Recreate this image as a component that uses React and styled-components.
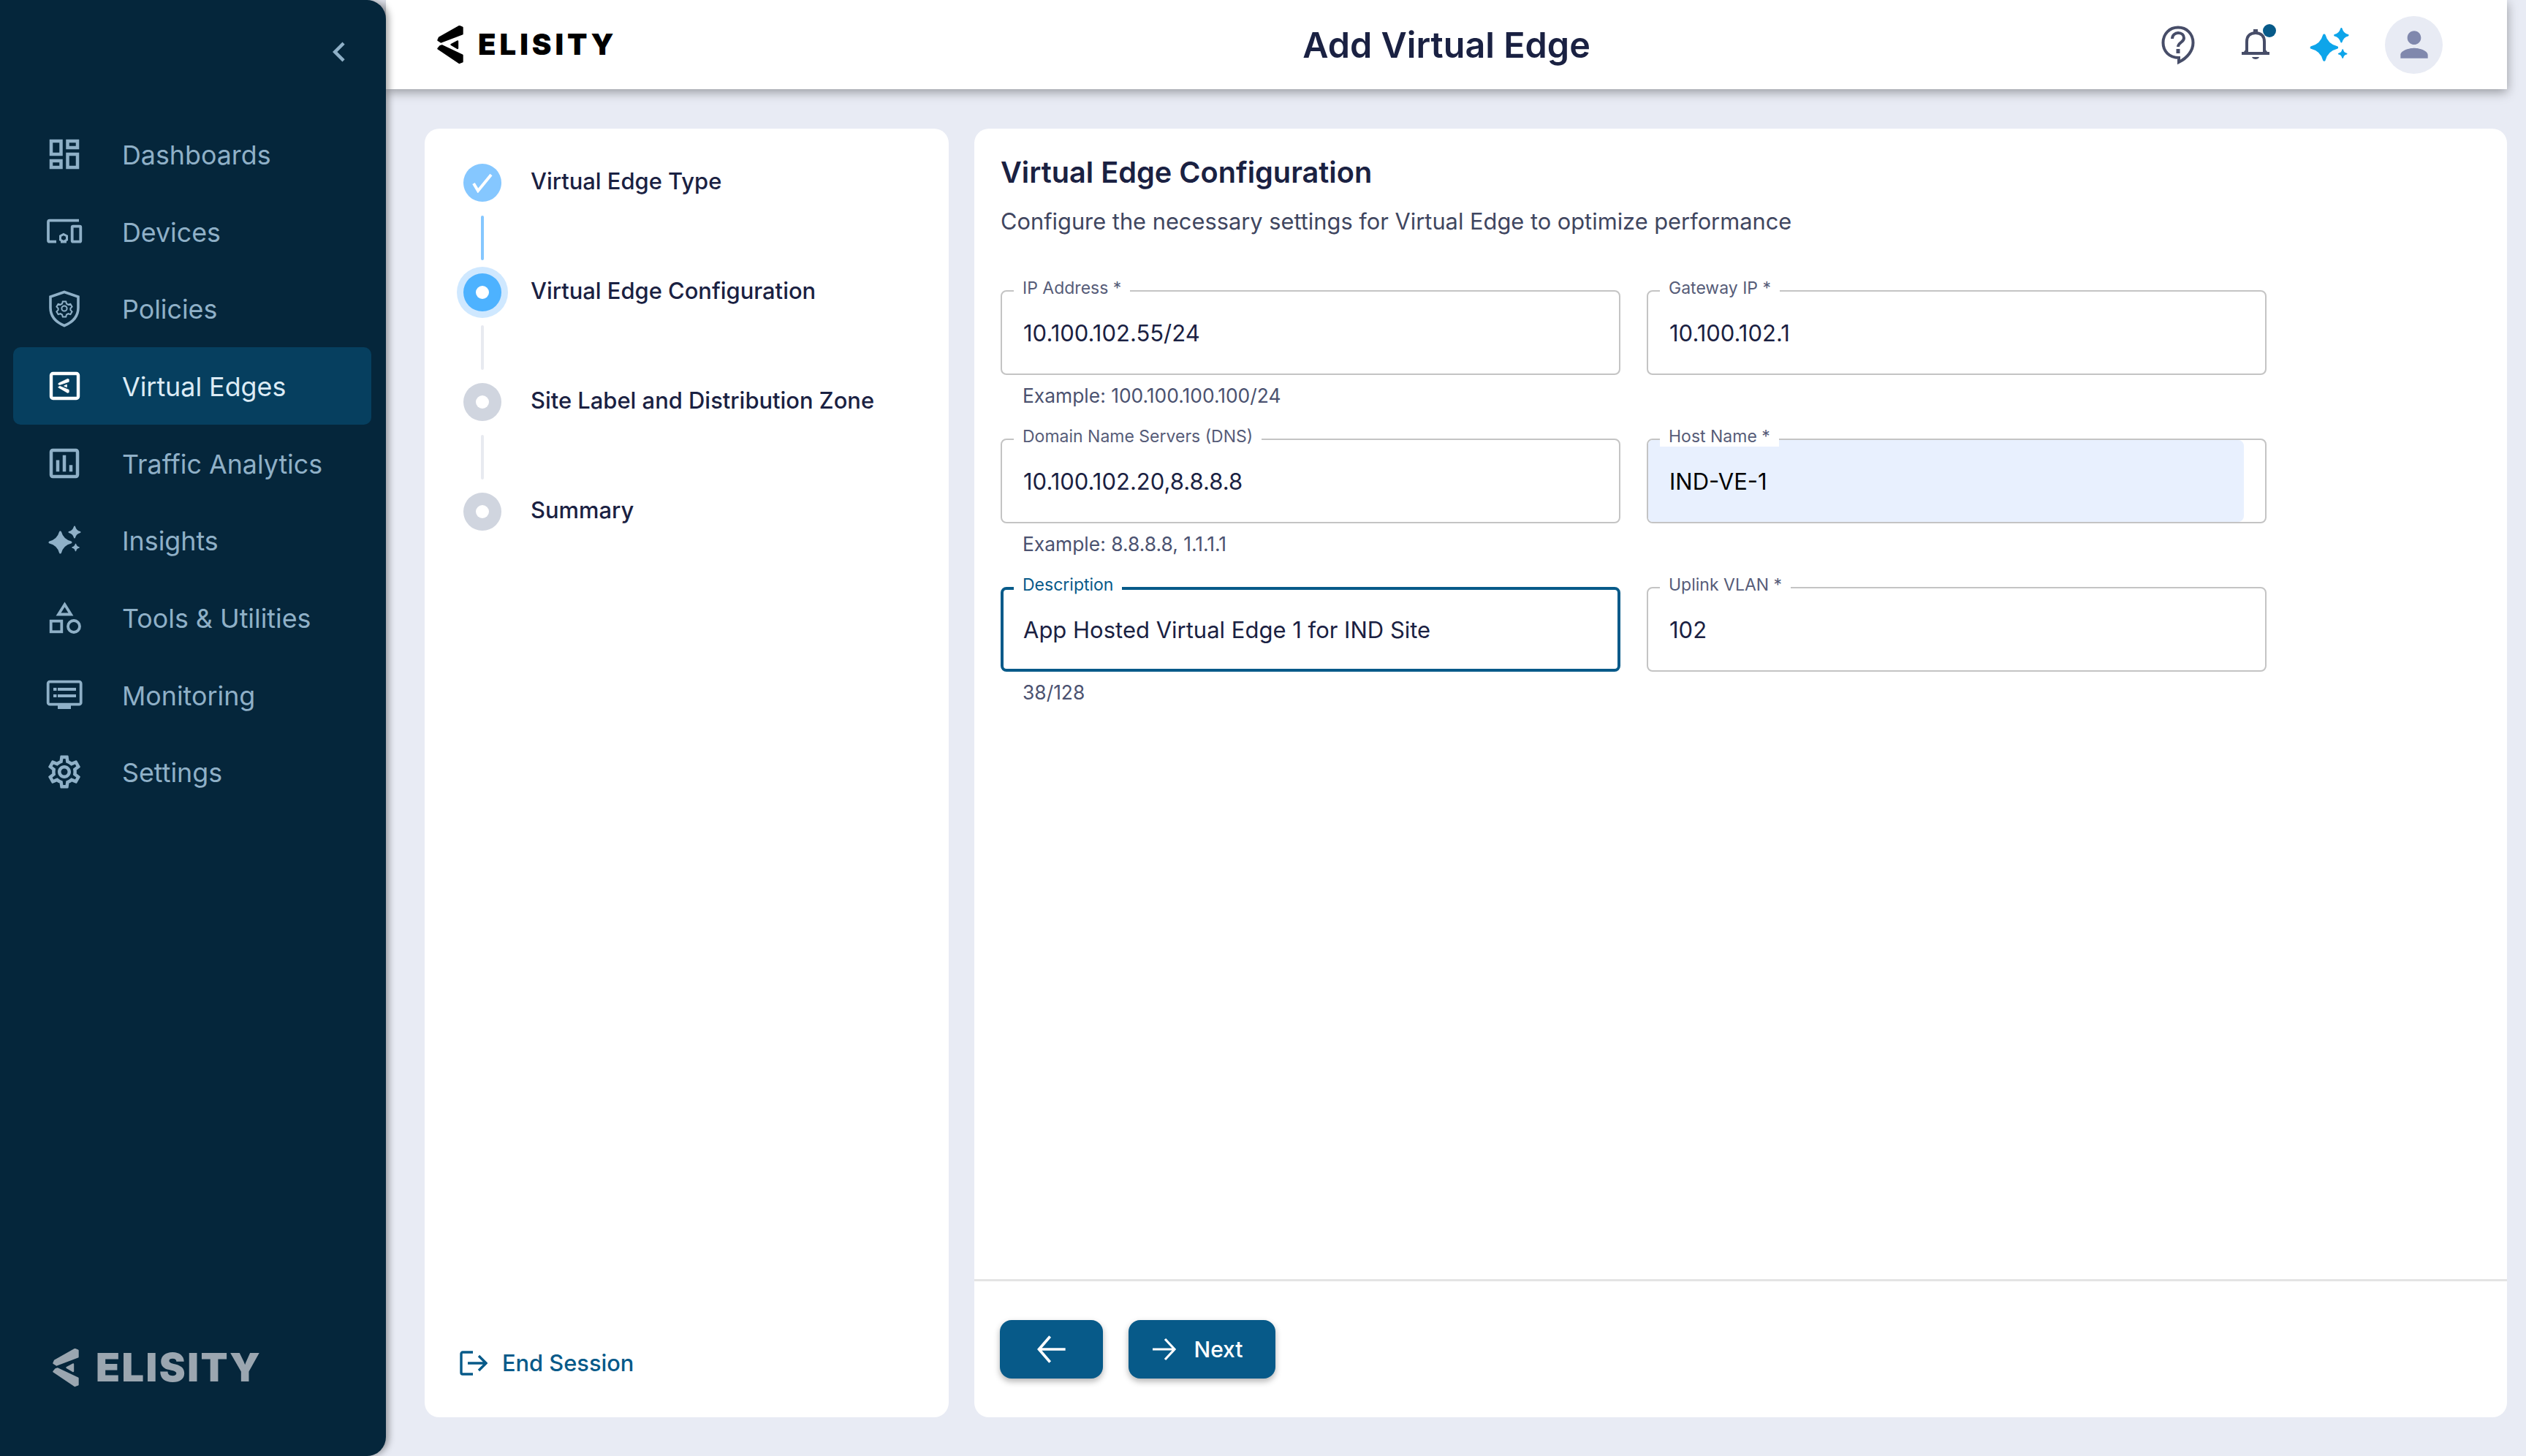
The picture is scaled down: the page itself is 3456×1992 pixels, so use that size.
import React from 'react';
import styled, {createGlobalStyle} from 'styled-components';
import {MdChevronLeft, MdOutlineDashboard, MdOutlineAssessment, MdOutlineSettings, MdPerson} from 'react-icons/md';

const GlobalStyle = createGlobalStyle`
    html, body {
        margin: 0;
        padding: 0;
    }
    body {
        background: #e8ebf4;
        font-family: Inter, "Noto Sans", sans-serif;
    }
    * {
        box-sizing: border-box;
    }
`;

const Page = styled.div`
    display: flex;
    width: 3456px;
    height: 1992px;
    background: #e8ebf4;
    overflow: hidden;
`;

const Sidebar = styled.aside`
    width: 528px;
    flex-shrink: 0;
    height: 100%;
    display: flex;
    flex-direction: column;
    background: #05263b;
    border-radius: 0 26px 26px 0;
    box-shadow: 4px 0 10px rgba(0,0,0,0.35);
    position: relative;
    z-index: 2;
`;

const CollapseRow = styled.div`
    height: 158px;
    display: flex;
    justify-content: flex-end;
    padding: 44px 37px 0 0;
    color: #8fb0c7;
    line-height: 0;
    svg {
        width: 54px;
        height: 54px;
    }
`;

const Nav = styled.nav`
    display: flex;
    flex-direction: column;
    padding: 0 20px 0 18px;
    flex: 1;
`;

const NavItem = styled.a`
    height: 105.7px;
    display: flex;
    align-items: center;
    border-radius: 10px;
    color: ${p => p.$active ? '#dcebf5' : '#8fb0c7'};
    background: ${p => p.$active ? '#063f5f' : 'transparent'};
    font-size: 35.8px;
    font-weight: 400;
`;

const NavText = styled.span`
    padding-top: 2px;
`;

const NavIcon = styled.span`
    width: 140px;
    margin-right: 9px;
    flex-shrink: 0;
    display: flex;
    justify-content: center;
    svg {
        width: 54px;
        height: 54px;
        display: block;
    }
`;

const SideLogo = styled.div`
    display: flex;
    align-items: center;
    gap: 23px;
    padding: 0 0 94px 72px;
    color: #9ba6b0;
    svg {
        width: 36px;
        height: 53px;
    }
`;

const LogoWord = styled.span`
    font-family: Inter, sans-serif;
    font-weight: 900;
    font-size: ${p => p.$size}px;
    letter-spacing: ${p => p.$spacing}px;
    line-height: 1;
`;

const Main = styled.div`
    flex: 1;
    min-width: 0;
    padding-right: 26px;
    display: flex;
    flex-direction: column;
`;

const Header = styled.header`
    height: 122px;
    flex-shrink: 0;
    background: #fff;
    display: grid;
    grid-template-columns: 1fr auto 1fr;
    align-items: center;
    padding: 0 88px;
    box-shadow: 0 4px 14px rgba(0,0,0,0.36);
    position: relative;
    z-index: 1;
`;

const HeaderLogo = styled.div`
    display: flex;
    align-items: center;
    gap: 20px;
    margin-left: -18px;
    color: #000;
    svg {
        width: 36px;
        height: 53px;
    }
`;

const Title = styled.h1`
    margin: 0;
    font-size: 48.5px;
    font-weight: 600;
    color: #1a2142;
`;

const HeaderActions = styled.div`
    display: flex;
    justify-content: flex-end;
    align-items: center;
`;

const ActionIcon = styled.span`
    display: block;
    line-height: 0;
    position: relative;
    margin-right: ${p => p.$gap}px;
`;

const HeaderSpark = styled(ActionIcon)`
    svg {
        width: 65px;
        height: 65px;
    }
`;

const NotifyDot = styled.span`
    position: absolute;
    top: -6px;
    right: -9px;
    width: 18px;
    height: 18px;
    border-radius: 50%;
    background: #075a89;
`;

const Avatar = styled.span`
    width: 79px;
    height: 79px;
    border-radius: 50%;
    background: #e8ebf4;
    color: #8088ad;
    display: flex;
    align-items: center;
    justify-content: center;
    svg {
        width: 56px;
        height: 56px;
    }
`;

const Content = styled.main`
    flex: 1;
    min-height: 0;
    display: flex;
    gap: 35px;
    padding: 54px 0 53px 53px;
`;

const Card = styled.section`
    background: #fff;
    border-radius: 20px;
    display: flex;
    flex-direction: column;
`;

const StepCard = styled(Card)`
    width: 717px;
    flex-shrink: 0;
    padding: 48px 0 0 53px;
    justify-content: space-between;
`;

const Steps = styled.ol`
    list-style: none;
    margin: 0;
    padding: 0;
`;

const Step = styled.li`
    display: flex;
    align-items: center;
    height: 52px;
    gap: 40px;
    font-size: 30.9px;
    font-weight: 500;
    color: #1a2142;
`;

const StepLabel = styled.span`
    position: relative;
    top: -3px;
`;

const StepCircle = styled.span`
    width: 52px;
    height: 52px;
    border-radius: 50%;
    flex-shrink: 0;
    display: flex;
    align-items: center;
    justify-content: center;
    background: ${p => ({done: '#85c7ff', active: '#4db2ff', pending: '#d0d5df'}[p.$state])};
    box-shadow: ${p => p.$state === 'active' ? '0 0 0 9px #cfe8ff' : 'none'};
`;

const StepDot = styled.span`
    width: 18px;
    height: 18px;
    border-radius: 50%;
    background: #fff;
`;

const Connector = styled.div`
    width: 4px;
    height: 61px;
    margin: 19px 0 18px 24px;
    border-radius: 2px;
    background: ${p => p.$done ? '#85c7ff' : '#e8eaf0'};
`;

const EndSession = styled.a`
    display: flex;
    align-items: center;
    gap: 20px;
    margin: 0 0 56px -5px;
    color: #075a89;
    font-size: 30.8px;
    font-weight: 500;
    svg {
        width: 38px;
        height: 34px;
    }
`;

const FormCard = styled(Card)`
    flex: 1;
    min-width: 0;
`;

const FormBody = styled.div`
    flex: 1;
    padding: 32px 36px 0;
`;

const FormTitle = styled.h2`
    margin: 0;
    font-size: 39.7px;
    line-height: 56px;
    font-weight: 600;
    color: #1a2142;
`;

const FormSubtitle = styled.p`
    margin: 17px 0 0;
    font-size: 30.8px;
    line-height: 44px;
    color: #3f4660;
`;

const FieldGrid = styled.div`
    display: grid;
    grid-template-columns: 848px 848px;
    grid-auto-rows: 203px;
    column-gap: 36px;
    margin-top: 72px;
`;

const Field = styled.div`
    position: relative;
`;

const FieldBox = styled.div`
    height: 116px;
    border-radius: 8px;
    border: ${p => p.$focused ? '4px solid #075a89' : '2px solid #c4c4c4'};
    display: flex;
    align-items: stretch;
    overflow: hidden;
`;

const FieldLabel = styled.label`
    position: absolute;
    top: -17px;
    left: 18px;
    padding: 0 12px;
    background: #fff;
    font-size: 23px;
    line-height: 28px;
    color: ${p => p.$focused ? '#075a89' : '#565c78'};
`;

const FieldValue = styled.div`
    width: ${p => p.$autofill ? 'calc(100% - 29px)' : '100%'};
    display: flex;
    align-items: center;
    padding-left: ${p => p.$focused ? '27px' : '29px'};
    border-radius: 0 8px 8px 0;
    background: ${p => p.$autofill ? '#e8f0fe' : 'transparent'};
    font-size: 31px;
    color: ${p => p.$autofill ? '#000' : '#1a2142'};
`;

const Helper = styled.div`
    margin: 11px 0 0 30px;
    font-size: 26.4px;
    line-height: 34px;
    color: #4b5270;
`;

const Footer = styled.footer`
    display: flex;
    gap: 35px;
    padding: 53px 35px;
    border-top: 3px solid #e4e4e4;
`;

const Button = styled.button`
    height: 80px;
    width: ${p => p.$width}px;
    padding: 0 ${p => p.$endSpace || 0}px 0 0;
    border: none;
    border-radius: 16px;
    background: #075a89;
    color: #fff;
    font-family: inherit;
    font-size: 30px;
    font-weight: 500;
    display: flex;
    align-items: center;
    justify-content: center;
    gap: 22px;
    box-shadow: 0 4px 8px rgba(0,0,0,0.3);
`;

const MarkPaths = () => (
    <>
        <path d="M30.5 1L3 16.5L1.5 20L5.5 22.5L34.5 11.5V2.5Z" />
        <path d="M28 21.5L19.5 26L28 31Z" />
        <path d="M4 28.5L1.5 31.5L30.5 51L34.5 49.5V40.5L7 27.5Z" />
    </>
);

const LogoMark = () => (
    <svg viewBox="0 0 36 53" fill="currentColor" stroke="currentColor" strokeWidth="2.4" strokeLinejoin="round">
        <MarkPaths />
    </svg>
);

const DevicesIcon = () => (
    <svg viewBox="0 0 54 54" fill="none" stroke="currentColor" strokeWidth="3.8">
        <path d="M47 11.7H7a2 2 0 0 0-2 2v25a2 2 0 0 0 2 2h9" />
        <rect x="37.7" y="19.7" width="11.6" height="20.9" rx="1.2" />
        <path d="M26 30.5L30.5 33V38L26 40.5L21.5 38V33Z" strokeWidth="3" />
        <path d="M22 41h8" strokeWidth="3" />
    </svg>
);

const PolicyIcon = () => (
    <svg viewBox="0 0 54 54" fill="none" stroke="currentColor" strokeWidth="3.6">
        <path d="M27 4.5L46 11V26C46 39 38 46 27 50.5C16 46 8 39 8 26V11Z" />
        <circle cx="27" cy="27" r="3.6" strokeWidth="2" />
        <path strokeWidth="2" d="M24.8 17.5h4.4l.8 3 2.4 1.3 3-.9 2.2 3.8-2.2 2.2v2.2l2.2 2.2-2.2 3.8-3-.9-2.4 1.3-.8 3h-4.4l-.8-3-2.4-1.3-3 .9-2.2-3.8 2.2-2.2v-2.2l-2.2-2.2 2.2-3.8 3 .9 2.4-1.3z" />
    </svg>
);

const EdgeIcon = () => (
    <svg viewBox="0 0 54 54" fill="none">
        <rect x="9" y="10" width="37" height="34" rx="2.5" stroke="#fff" strokeWidth="4.4" />
        <g transform="translate(18 17) scale(0.44 0.38)" fill="#fff" stroke="#fff" strokeWidth="2" strokeLinejoin="round">
            <MarkPaths />
        </g>
    </svg>
);

const SparkIcon = ({color = 'currentColor'}) => (
    <svg viewBox="0 0 54 54" fill={color} stroke={color} strokeLinejoin="round">
        <path strokeWidth="3" d="M21.5 16C23.5 23.5 28 28 36 30C28 32 23.5 36.5 21.5 44C19.5 36.5 15 32 7 30C15 28 19.5 23.5 21.5 16Z" />
        <path strokeWidth="2" d="M41 8.5C42 12 44.5 15 48.5 16C44.5 17 42 20 41 23.5C40 20 37.5 17 33.5 16C37.5 15 40 12 41 8.5Z" />
        <path strokeWidth="1.5" d="M42.5 32.5C43 35 44.5 36.5 47 37C44.5 37.5 43 39 42.5 41.5C42 39 40.5 37.5 38 37C40.5 36.5 42 35 42.5 32.5Z" />
    </svg>
);

const ToolsIcon = () => (
    <svg viewBox="0 0 54 54" fill="none" stroke="currentColor" strokeWidth="3.8">
        <path d="M27.5 9L36 22.5H19Z" />
        <rect x="8.7" y="31.7" width="14.6" height="14.6" />
        <circle cx="40" cy="39" r="8" />
    </svg>
);

const MonitorIcon = () => (
    <svg viewBox="0 0 54 54" fill="none" stroke="currentColor" strokeWidth="3.8">
        <rect x="4.7" y="8.7" width="45" height="31" rx="2.5" />
        <path d="M18 19H43M18 28H43M12 19H16.5M12 28H16.5" strokeWidth="4" />
        <path d="M18 43H36" strokeWidth="6" />
    </svg>
);

const HelpIcon = () => (
    <svg width="50" height="56" viewBox="0 0 50 56" fill="none" stroke="#474d68" strokeWidth="4">
        <path d="M26 46C13 46 4.5 37 4.5 25.5C4.5 13 13.5 4.5 25 4.5C36.5 4.5 45.5 13 45.5 25.5C45.5 36 38 46 26 52Z" />
        <path d="M17 20C17 15 21 12 25 12C30 12 33 15 33 19C33 25 25 25 25 31" />
        <path d="M25 34V40" strokeWidth="5" />
    </svg>
);

const BellIcon = () => (
    <svg width="38" height="44" viewBox="0 0 38 44" fill="none" stroke="#474d68" strokeWidth="4">
        <path d="M0 34H38" />
        <path d="M7 34V18C7 10 12 6 19 6C26 6 31 10 31 18V34" />
        <path d="M4 34L7 30M34 34L31 30" />
        <path d="M19 1V6" strokeWidth="6" />
        <path d="M14 39C15 43 23 43 24 39Z" fill="#474d68" stroke="none" />
    </svg>
);

const ArrowIcon = ({flip, size}) => (
    <svg width={size} height={size} viewBox="0 0 36 36" fill="none" stroke="#fff" strokeWidth="3.2">
        {flip
            ? <path d="M34 18H3M16 3L3 18L16 33" />
            : <path d="M2 18H32M19 4L32 18L19 32" />}
    </svg>
);

const ExitIcon = () => (
    <svg viewBox="0 0 38 34" fill="none" stroke="currentColor" strokeWidth="3.4">
        <path d="M18 2H4a2 2 0 0 0-2 2v26a2 2 0 0 0 2 2h14" />
        <path d="M11 17H35M26 7L36 17L26 27" />
    </svg>
);

const navItems = [
    {label: 'Dashboards', icon: <MdOutlineDashboard />},
    {label: 'Devices', icon: <DevicesIcon />},
    {label: 'Policies', icon: <PolicyIcon />},
    {label: 'Virtual Edges', icon: <EdgeIcon />, active: true},
    {label: 'Traffic Analytics', icon: <MdOutlineAssessment />},
    {label: 'Insights', icon: <SparkIcon />},
    {label: 'Tools & Utilities', icon: <ToolsIcon />},
    {label: 'Monitoring', icon: <MonitorIcon />},
    {label: 'Settings', icon: <MdOutlineSettings />},
];

const steps = [
    {label: 'Virtual Edge Type', state: 'done'},
    {label: 'Virtual Edge Configuration', state: 'active'},
    {label: 'Site Label and Distribution Zone', state: 'pending'},
    {label: 'Summary', state: 'pending'},
];

const fields = [
    {label: 'IP Address *', value: '10.100.102.55/24', helper: 'Example: 100.100.100.100/24'},
    {label: 'Gateway IP *', value: '10.100.102.1'},
    {label: 'Domain Name Servers (DNS)', value: '10.100.102.20,8.8.8.8', helper: 'Example: 8.8.8.8, 1.1.1.1'},
    {label: 'Host Name *', value: 'IND-VE-1', autofill: true},
    {label: 'Description', value: 'App Hosted Virtual Edge 1 for IND Site', helper: '38/128', focused: true},
    {label: 'Uplink VLAN *', value: '102'},
];

const App = () => (
    <Page>
        <GlobalStyle />
        <Sidebar>
            <CollapseRow><MdChevronLeft /></CollapseRow>
            <Nav>
                {navItems.map(item => (
                    <NavItem key={item.label} $active={item.active}>
                        <NavIcon>{item.icon}</NavIcon>
                        <NavText>{item.label}</NavText>
                    </NavItem>
                ))}
            </Nav>
            <SideLogo>
                <LogoMark />
                <LogoWord $size={54} $spacing={2.5}>ELISITY</LogoWord>
            </SideLogo>
        </Sidebar>
        <Main>
            <Header>
                <HeaderLogo>
                    <LogoMark />
                    <LogoWord $size={40} $spacing={5}>ELISITY</LogoWord>
                </HeaderLogo>
                <Title>Add Virtual Edge</Title>
                <HeaderActions>
                    <ActionIcon $gap={62}><HelpIcon /></ActionIcon>
                    <ActionIcon $gap={49}><BellIcon /><NotifyDot /></ActionIcon>
                    <HeaderSpark $gap={44}><SparkIcon color="#0ea5ea" /></HeaderSpark>
                    <Avatar><MdPerson /></Avatar>
                </HeaderActions>
            </Header>
            <Content>
                <StepCard>
                    <Steps>
                        {steps.map((step, i) => (
                            <React.Fragment key={step.label}>
                                <Step>
                                    <StepCircle $state={step.state}>
                                        {step.state === 'done'
                                            ? <svg width="30" height="28" viewBox="0 0 30 28" fill="none" stroke="#fff" strokeWidth="4"><path d="M3 15L9 25L27 3" /></svg>
                                            : <StepDot />}
                                    </StepCircle>
                                    <StepLabel>{step.label}</StepLabel>
                                </Step>
                                {i < steps.length - 1 && <Connector $done={step.state === 'done'} />}
                            </React.Fragment>
                        ))}
                    </Steps>
                    <EndSession><ExitIcon />End Session</EndSession>
                </StepCard>
                <FormCard>
                    <FormBody>
                        <FormTitle>Virtual Edge Configuration</FormTitle>
                        <FormSubtitle>Configure the necessary settings for Virtual Edge to optimize performance</FormSubtitle>
                        <FieldGrid>
                            {fields.map(field => (
                                <Field key={field.label}>
                                    <FieldBox $focused={field.focused}>
                                        <FieldValue $focused={field.focused} $autofill={field.autofill}>{field.value}</FieldValue>
                                    </FieldBox>
                                    <FieldLabel $focused={field.focused}>{field.label}</FieldLabel>
                                    {field.helper && <Helper>{field.helper}</Helper>}
                                </Field>
                            ))}
                        </FieldGrid>
                    </FormBody>
                    <Footer>
                        <Button $width={141}><ArrowIcon flip size={42} /></Button>
                        <Button $width={201} $endSpace={13}><ArrowIcon size={36} />Next</Button>
                    </Footer>
                </FormCard>
            </Content>
        </Main>
    </Page>
);

export default App;
